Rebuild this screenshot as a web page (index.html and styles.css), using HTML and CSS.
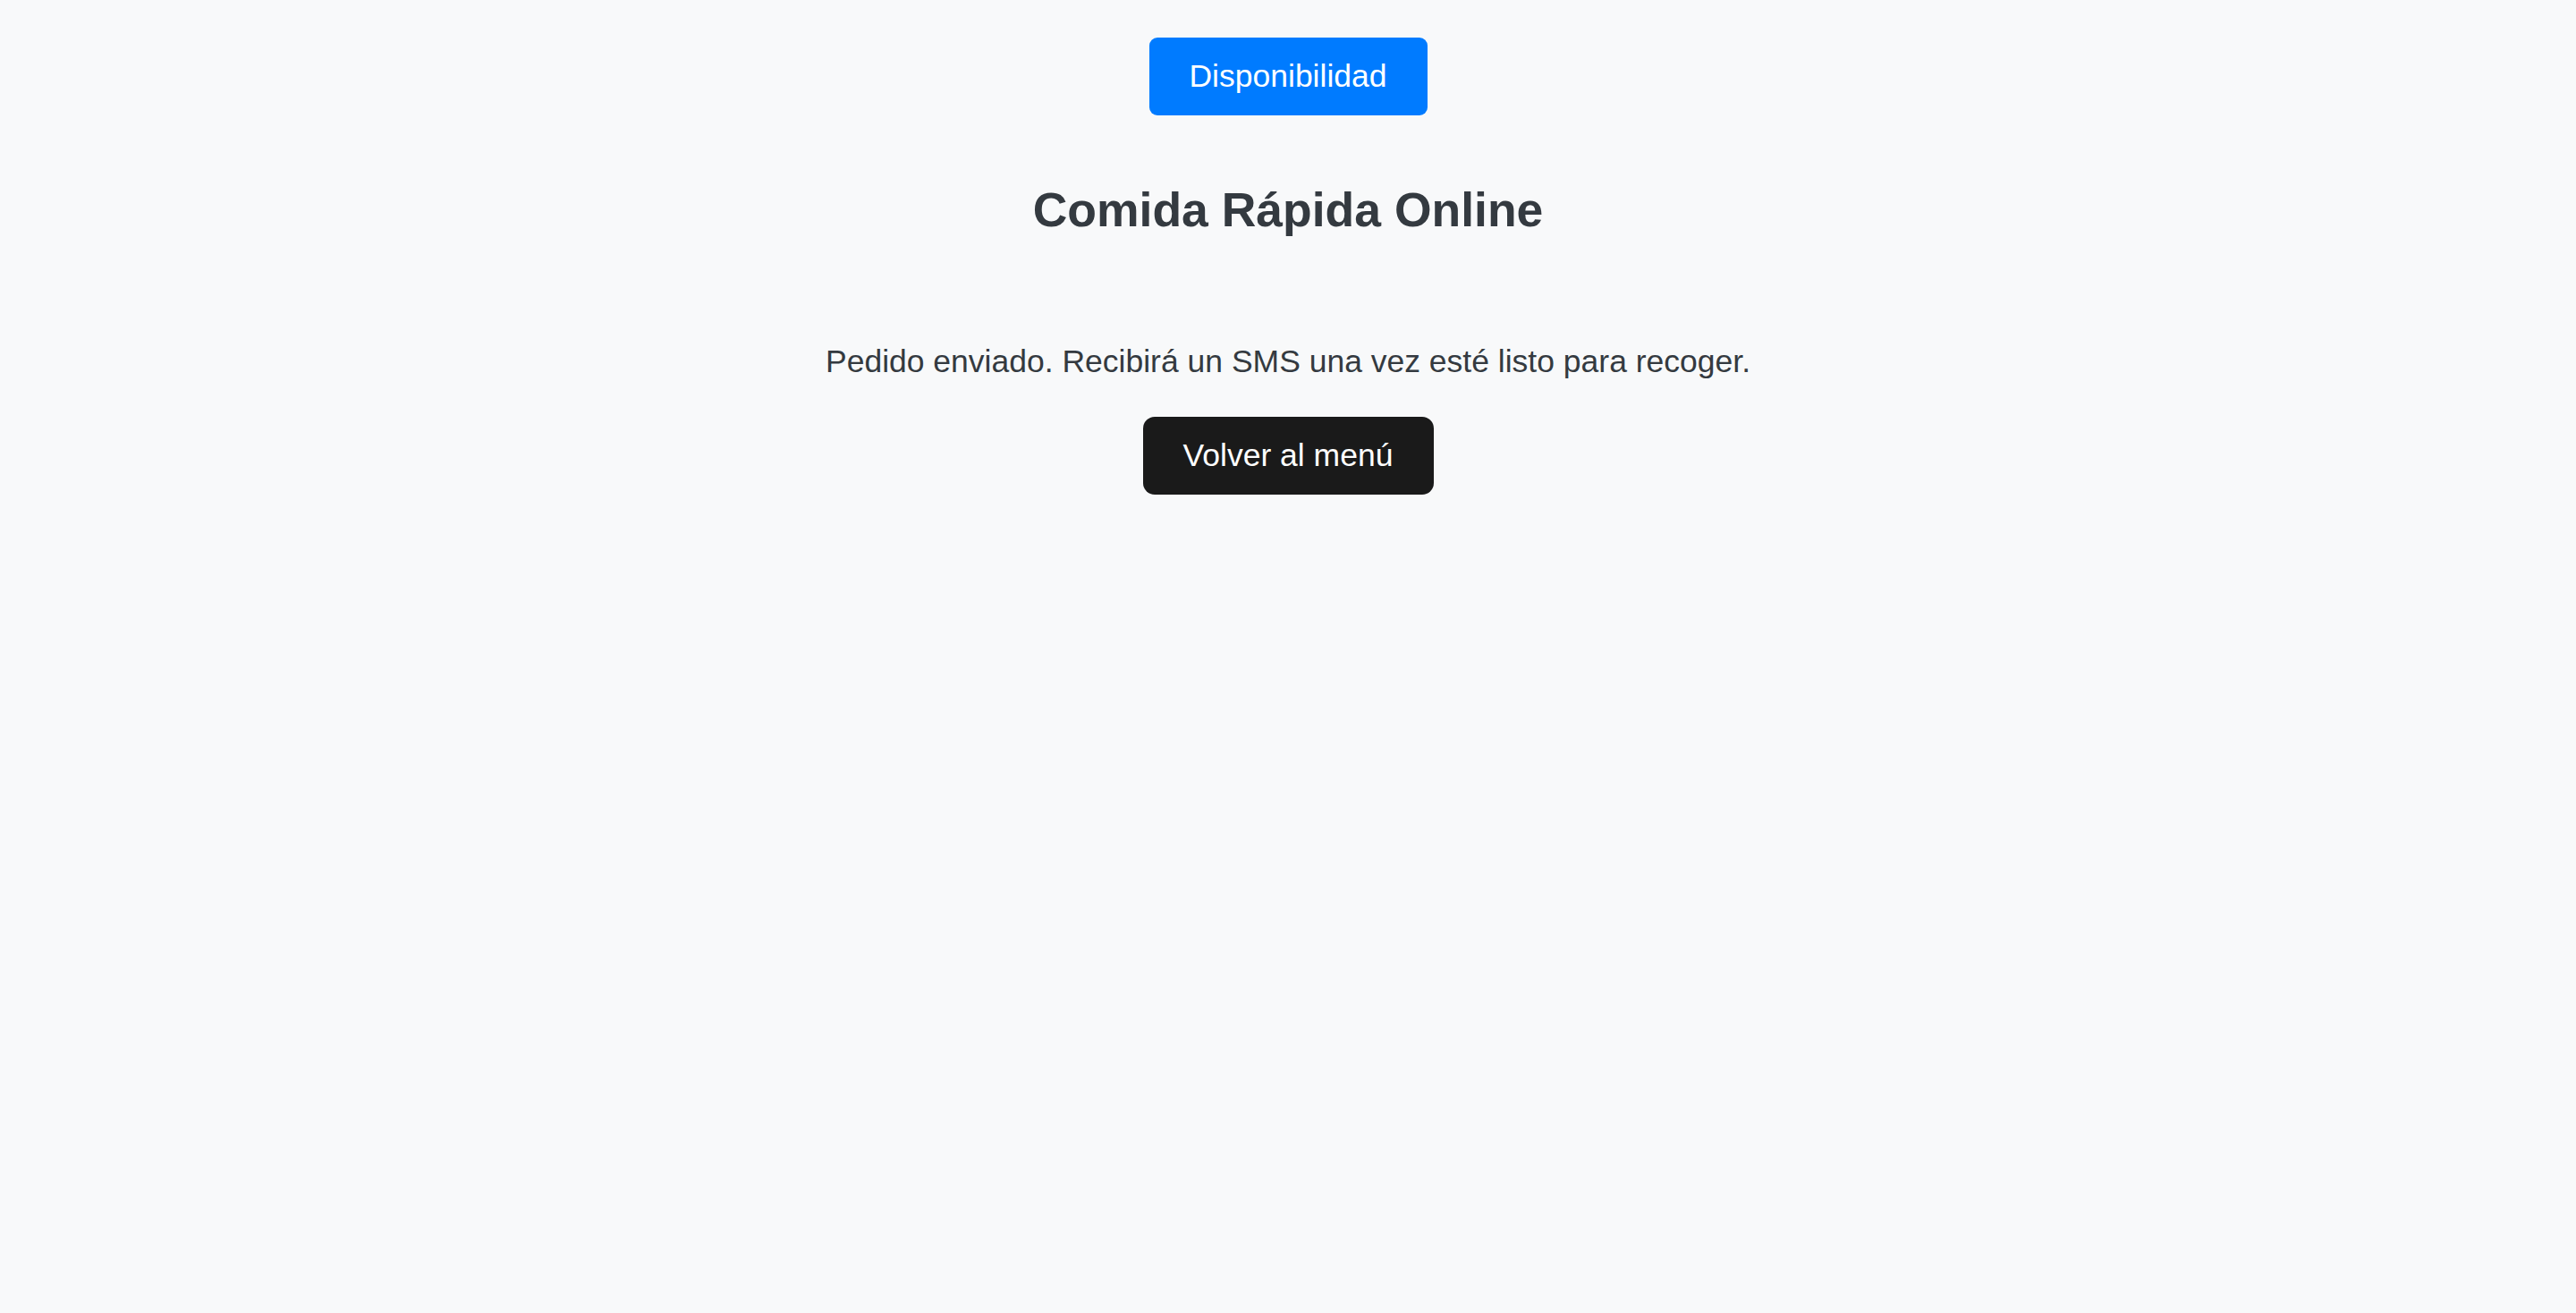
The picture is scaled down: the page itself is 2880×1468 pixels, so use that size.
FILE: index.html
```html
<!DOCTYPE html>
<html lang="es">
<head>
<meta charset="utf-8">
<title>Comida Rápida Online</title>
<link rel="stylesheet" href="styles.css">
</head>
<body>
<main class="page">
  <div class="top-bar">
    <button class="btn btn-blue" type="button">Disponibilidad</button>
  </div>
  <h2 class="title">Comida Rápida Online</h2>
  <p class="message">Pedido enviado. Recibirá un SMS una vez esté listo para recoger.</p>
  <button class="btn btn-dark" type="button">Volver al menú</button>
</main>
</body>
</html>
```
FILE: styles.css
```css
html, body {
  margin: 0;
  padding: 0;
  background: #f8f9fa;
}
body {
  font-family: "Liberation Sans", Arial, sans-serif;
  color: #343a40;
  min-height: 1468px;
}
.page {
  display: flex;
  flex-direction: column;
  align-items: center;
  padding-top: 42px;
}
.top-bar {
  display: flex;
  justify-content: center;
}
.btn {
  font-family: "Liberation Sans", Arial, sans-serif;
  font-size: 35.5px;
  line-height: 41px;
  padding: 23px 0;
  border: none;
  color: #ffffff;
  cursor: pointer;
  box-sizing: border-box;
  height: 87px;
}
.btn-blue {
  background: #007bff;
  border-radius: 9px;
  width: 311px;
}
.btn-dark {
  background: #1a1a1a;
  border-radius: 13px;
  width: 325px;
  margin-top: 41px;
}
.title {
  margin: 75px 0 0;
  font-size: 53.5px;
  font-weight: bold;
  line-height: 61px;
  color: #343a40;
}
.message {
  margin: 119px 0 0;
  font-size: 35.5px;
  line-height: 41px;
  color: #343a40;
}
```
